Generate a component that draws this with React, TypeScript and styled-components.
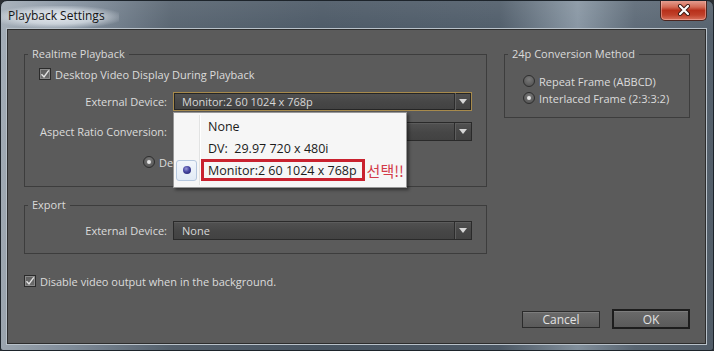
import React from 'react';
import styled, { createGlobalStyle } from 'styled-components';

const GlobalStyle = createGlobalStyle`
  html, body { margin: 0; padding: 0; background: #2a2e33; }
  body { font-family: "Open Sans", "Noto Sans", sans-serif; }
  * { box-sizing: border-box; }
`;

const Window = styled.div`
  width: 714px;
  height: 351px;
  display: flex;
  flex-direction: column;
  padding: 0 7px 6px 6px;
  border: 1px solid #1d242b;
  border-radius: 7px 7px 3px 3px;
  overflow: hidden;
  background:
    linear-gradient(180deg, rgba(255,255,255,0.08) 0%, rgba(0,0,0,0) 10%, rgba(0,0,0,0.05) 100%),
    linear-gradient(90deg, #a3adb7 0%, #8592a0 10%, #59667380 24%, #4c5966 45%, #505d6a 70%, #8896a3 81%, #5d6a77 89%, #55616d 100%),
    #56626e;
`;

const TitleBar = styled.div`
  height: 28px;
  display: flex;
  align-items: flex-start;
  justify-content: space-between;
`;

const Title = styled.div`
  margin: 5px 0 0 -11px;
  padding: 0 14px 0 12px;
  height: 22px;
  line-height: 20px;
  font-size: 12px;
  color: #141414;
  background: radial-gradient(ellipse at 50% 50%, rgba(236,240,244,0.9) 0%, rgba(226,232,238,0.7) 45%, rgba(210,218,226,0) 78%);
`;

const CloseButton = styled.div`
  width: 47px;
  height: 21px;
  margin: -1px -1px 0 0;
  display: flex;
  align-items: center;
  justify-content: center;
  border: 1px solid #4c2620;
  border-top: none;
  border-radius: 0 0 5px 5px;
  background: linear-gradient(180deg, #e7a598 0%, #d46a55 35%, #b8301b 52%, #c0402a 75%, #d9735e 100%);
  box-shadow: inset 0 0 0 1px rgba(255, 200, 190, 0.45);
`;

const Client = styled.div`
  flex: 1;
  display: flex;
  flex-direction: column;
  padding: 17px 15px 0 16px;
  background: #5b5b5b;
  border: 1px solid #2d2d2d;
  box-shadow: 0 0 0 1px #b8c1c9;
  color: #dcdcdc;
  font-size: 11px;
`;

const TopRow = styled.div`
  display: flex;
  align-items: flex-start;
  gap: 17px;
`;

const Group = styled.fieldset<{ $w: number; $pad: string; $top?: number }>`
  width: ${p => p.$w}px;
  min-width: 0;
  margin: ${p => p.$top ?? 0}px 0 0 0;
  padding: ${p => p.$pad};
  border: 1px solid #3d3d3d;
  display: flex;
  flex-direction: column;
`;

const Legend = styled.legend`
  margin-left: 3px;
  padding: 0 4px;
  line-height: 14px;
  font-size: 11px;
  color: #dadada;
`;

const CheckRow = styled.label<{ $indent: number; $top?: number }>`
  display: flex;
  align-items: center;
  gap: 4px;
  height: 16px;
  padding-left: ${p => p.$indent}px;
  margin-top: ${p => p.$top ?? 0}px;
  white-space: nowrap;
`;

const CheckBox = styled.span`
  width: 12px;
  height: 12px;
  display: flex;
  align-items: center;
  justify-content: center;
  border: 1px solid #2b2b2b;
  background: linear-gradient(180deg, #5f5f5f, #6c6c6c);
  box-shadow: inset 0 0 0 1px #8a8a8a;
`;

const FieldGrid = styled.div<{ $top: number }>`
  display: grid;
  grid-template-columns: 129px 299px;
  column-gap: 6px;
  row-gap: 11px;
  align-items: center;
  padding-left: 13px;
  margin-top: ${p => p.$top}px;
`;

const FieldLabel = styled.span`
  text-align: right;
  white-space: nowrap;
`;

const Select = styled.div<{ $focused?: boolean }>`
  position: relative;
  height: 19px;
  display: flex;
  align-items: center;
  padding-left: 8px;
  border: 1px solid ${p => (p.$focused ? '#a78a4c' : '#2a2a2a')};
  background: linear-gradient(180deg, #515151 0%, #464646 55%, #424242 100%);
  box-shadow: ${p => (p.$focused ? 'inset 0 0 0 1px #252525' : 'inset 0 1px 0 #5c5c5c')};
  white-space: nowrap;
`;

const SelectValue = styled.span`
  flex: 1;
  color: #d8d8d8;
`;

const ArrowCell = styled.span`
  width: 17px;
  align-self: stretch;
  display: flex;
  align-items: center;
  justify-content: center;
  border-left: 1px solid #2c2c2c;
  box-shadow: inset 1px 0 0 #5e5e5e;
  &::after {
    content: '';
    border-left: 4px solid transparent;
    border-right: 4px solid transparent;
    border-top: 5px solid #d6d6d6;
  }
`;

const RadioRow = styled.div<{ $indent: number; $top: number }>`
  display: flex;
  align-items: center;
  height: 16px;
  padding-left: ${p => p.$indent}px;
  margin-top: ${p => p.$top}px;
  white-space: nowrap;
`;

const RadioStack = styled.div`
  display: flex;
  flex-direction: column;
  gap: 1px;
  padding-left: 18px;
`;

const RadioOption = styled.label`
  display: flex;
  align-items: center;
  gap: 4px;
  height: 16px;
  white-space: nowrap;
`;

const Radio = styled.span<{ $on?: boolean }>`
  width: 12px;
  height: 12px;
  border-radius: 50%;
  display: flex;
  align-items: center;
  justify-content: center;
  border: 1px solid #2e2e2e;
  background: radial-gradient(circle at 50% 35%, #7a7a7a, #4c4c4c);
  &::after {
    content: '';
    width: 4px;
    height: 4px;
    border-radius: 50%;
    background: ${p => (p.$on ? '#e6e6e6' : 'transparent')};
  }
`;

const Menu = styled.div`
  position: absolute;
  top: 19px;
  left: -1px;
  width: 234px;
  padding: 2px 2px 6px 2px;
  background: #f6f6f6;
  border: 1px solid #979797;
  box-shadow: 2px 2px 3px rgba(0, 0, 0, 0.45);
  color: #1b1b1b;
  font-size: 12.5px;
  z-index: 5;
  &::before {
    content: '';
    position: absolute;
    left: 25px;
    top: 2px;
    bottom: 2px;
    width: 1px;
    background: #e2e3e3;
    box-shadow: 1px 0 0 #ffffff;
  }
`;

const MenuItem = styled.div`
  position: relative;
  height: 22px;
  display: flex;
  align-items: center;
`;

const MenuIcon = styled.span<{ $checked?: boolean }>`
  width: 21px;
  height: 21px;
  margin-right: 1px;
  display: flex;
  align-items: center;
  justify-content: center;
  border-radius: 3px;
  border: 1px solid ${p => (p.$checked ? '#b5c7de' : 'transparent')};
  background: ${p => (p.$checked ? 'linear-gradient(180deg, #f2f6fb, #e2ebf6)' : 'transparent')};
  &::after {
    content: '';
    width: 8px;
    height: 8px;
    border-radius: 50%;
    display: ${p => (p.$checked ? 'block' : 'none')};
    background: radial-gradient(circle at 40% 35%, #9a9ad8 0%, #4545a0 45%, #1f1f66 100%);
  }
`;

const MenuLabel = styled.span<{ $marked?: boolean }>`
  margin-left: 3px;
  height: 22px;
  display: flex;
  align-items: center;
  padding: 0 5px 0 4px;
  border: 3px solid ${p => (p.$marked ? '#c9222f' : 'transparent')};
  white-space: pre;
`;

const Note = styled.span`
  margin-left: 2px;
  font-family: "Noto Sans CJK KR", "Noto Sans", sans-serif;
  font-size: 15px;
  color: #d23a48;
  white-space: nowrap;
`;

const ButtonRow = styled.div`
  margin-top: auto;
  margin-bottom: 14px;
  display: flex;
  justify-content: flex-end;
  align-items: center;
  gap: 12px;
`;

const Button = styled.div<{ $primary?: boolean }>`
  width: 78px;
  height: ${p => (p.$primary ? 20 : 17)}px;
  display: flex;
  align-items: center;
  justify-content: center;
  font-size: 12px;
  color: #e2e2e2;
  border: ${p => (p.$primary ? '2px solid #1d1d1d' : '1px solid #2b2b2b')};
  background: linear-gradient(180deg, #6a6a6a 0%, #5a5a5a 100%);
  box-shadow: inset 0 1px 0 #7c7c7c;
`;

const CheckMark = () => (
  <svg width="10" height="10" viewBox="0 0 10 10">
    <path d="M1.5 5.2 L4 8 L8.8 1.3" fill="none" stroke="#e4e4e4" strokeWidth="1.4" />
  </svg>
);

const CloseGlyph = () => (
  <svg width="14" height="12" viewBox="0 0 14 12">
    <path d="M3 2 L11 10 M11 2 L3 10" stroke="#3a1a14" strokeWidth="4" strokeLinecap="round" />
    <path d="M3 2 L11 10 M11 2 L3 10" stroke="#ffffff" strokeWidth="2.2" strokeLinecap="round" />
  </svg>
);

const deviceOptions = ['None', 'DV:  29.97 720 x 480i', 'Monitor:2 60 1024 x 768p'];

export default function App() {
  const selected = 2;
  return (
    <>
      <GlobalStyle />
      <Window>
        <TitleBar>
          <Title>Playback Settings</Title>
          <CloseButton>
            <CloseGlyph />
          </CloseButton>
        </TitleBar>
        <Client>
          <TopRow>
            <Group $w={463} $pad="5px 0 16px 0">
              <Legend>Realtime Playback</Legend>
              <CheckRow $indent={14}>
                <CheckBox>
                  <CheckMark />
                </CheckBox>
                Desktop Video Display During Playback
              </CheckRow>
              <FieldGrid $top={10}>
                <FieldLabel>External Device:</FieldLabel>
                <Select $focused>
                  <SelectValue>{deviceOptions[selected]}</SelectValue>
                  <ArrowCell />
                  <Menu>
                    {deviceOptions.map((opt, i) => (
                      <MenuItem key={opt}>
                        <MenuIcon $checked={i === selected} />
                        <MenuLabel $marked={i === selected}>{opt}</MenuLabel>
                        {i === selected && <Note>선택!!</Note>}
                      </MenuItem>
                    ))}
                  </Menu>
                </Select>
                <FieldLabel>Aspect Ratio Conversion:</FieldLabel>
                <Select>
                  <SelectValue />
                  <ArrowCell />
                </Select>
              </FieldGrid>
              <RadioRow $indent={118} $top={13}>
                <RadioOption>
                  <Radio $on />
                  De
                </RadioOption>
              </RadioRow>
            </Group>
            <Group $w={186} $pad="12px 0 11px 0">
              <Legend>24p Conversion Method</Legend>
              <RadioStack>
                <RadioOption>
                  <Radio />
                  Repeat Frame (ABBCD)
                </RadioOption>
                <RadioOption>
                  <Radio $on />
                  Interlaced Frame (2:3:3:2)
                </RadioOption>
              </RadioStack>
            </Group>
          </TopRow>
          <Group $w={463} $pad="9px 0 13px 0" $top={11}>
            <Legend>Export</Legend>
            <FieldGrid $top={0}>
              <FieldLabel>External Device:</FieldLabel>
              <Select>
                <SelectValue>None</SelectValue>
                <ArrowCell />
              </Select>
            </FieldGrid>
          </Group>
          <CheckRow $indent={0} $top={19}>
            <CheckBox>
              <CheckMark />
            </CheckBox>
            Disable video output when in the background.
          </CheckRow>
          <ButtonRow>
            <Button>Cancel</Button>
            <Button $primary>OK</Button>
          </ButtonRow>
        </Client>
      </Window>
    </>
  );
}
